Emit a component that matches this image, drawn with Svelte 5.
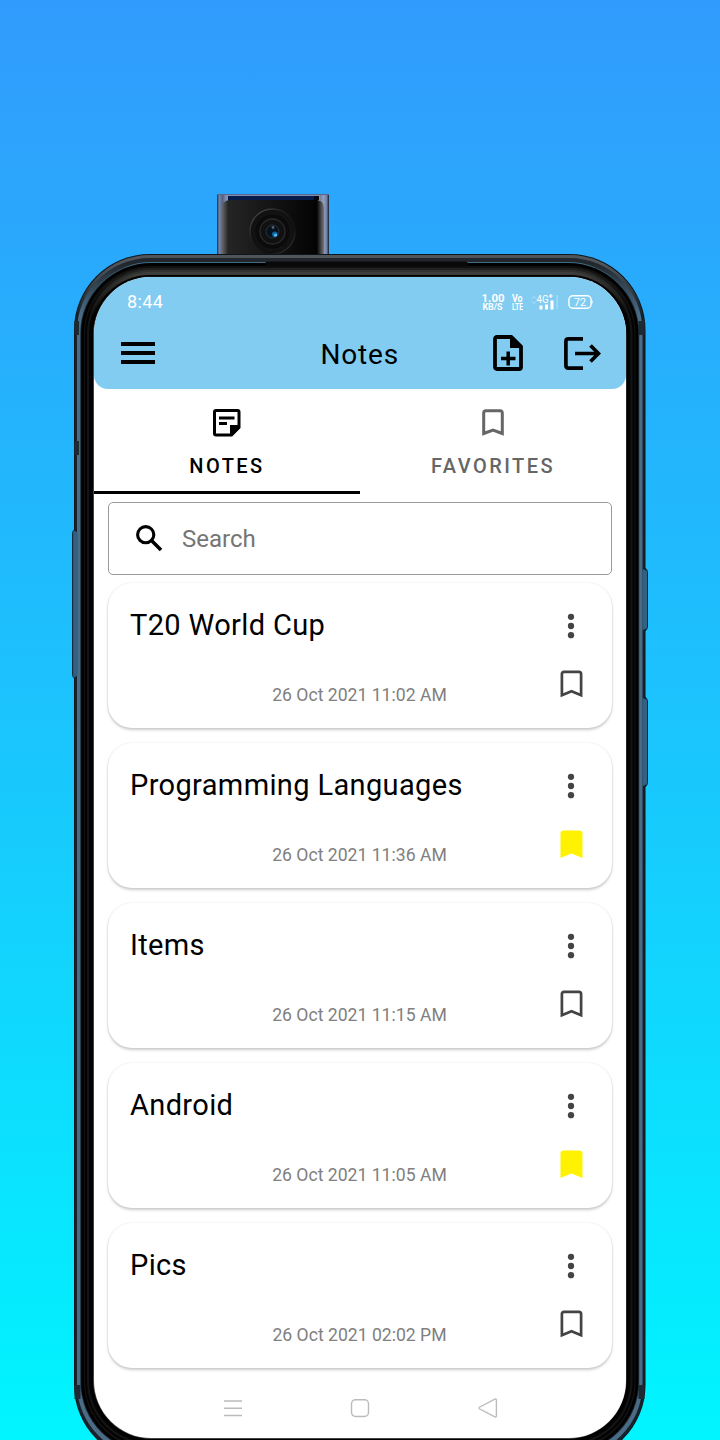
<script>
  const notes = [
    { title: 'T20 World Cup', date: '26 Oct 2021 11:02 AM', saved: false },
    { title: 'Programming Languages', date: '26 Oct 2021 11:36 AM', saved: true },
    { title: 'Items', date: '26 Oct 2021 11:15 AM', saved: false },
    { title: 'Android', date: '26 Oct 2021 11:05 AM', saved: true },
    { title: 'Pics', date: '26 Oct 2021 02:02 PM', saved: false }
  ];

  // Concentric layers of the phone body, from the outer edge to the glass.
  const layers = [
    { l: 74, t: 254, r: 76, fill: '#0d161d' },
    { l: 75, t: 255, r: 75, fill: 'url(#rim)' },
    { l: 77, t: 258, r: 73, fill: 'url(#rimInner)' },
    { l: 80.3, t: 262, r: 71, fill: 'url(#line)' },
    { l: 81.2, t: 263, r: 70, fill: '#000' },
    { l: 84, t: 266, r: 67, fill: 'url(#bezelA)' },
    { l: 85, t: 268, r: 66, fill: 'url(#bezelB)' },
    { l: 87, t: 270, r: 64, fill: 'url(#bezelC)' },
    { l: 89, t: 272, r: 62, fill: 'url(#bezelD)' },
    { l: 91, t: 275, r: 59, fill: '#000' },
    { l: 93, t: 276, r: 59, fill: 'url(#edge)' }
  ];
  const gradients = [
    { id: 'rim', top: '#50555b', side: '#17232c' },
    { id: 'rimInner', top: '#22272d', side: '#4b6c86' },
    { id: 'line', top: '#3f6d85', side: '#1b2a35' },
    { id: 'bezelA', top: '#101010', side: '#121212' },
    { id: 'bezelB', top: '#242423', side: '#020202' },
    { id: 'bezelC', top: '#363634', side: '#141414' },
    { id: 'bezelD', top: '#4b4b48', side: '#030303' },
    { id: 'edge', top: '#020202', side: '#444' }
  ];
</script>

<main>
  <svg class="device" viewBox="0 0 720 1440" aria-hidden="true">
    <defs>
      {#each gradients as g}
        <linearGradient id={g.id} gradientUnits="userSpaceOnUse" x1="0" y1="254" x2="0" y2="335">
          <stop offset="0.12" stop-color={g.top} />
          <stop offset="0.75" stop-color={g.side} />
        </linearGradient>
      {/each}
      <linearGradient id="pillar">
        <stop offset="0" stop-color="#202940" />
        <stop offset="0.02" stop-color="#7485ad" />
        <stop offset="0.05" stop-color="#55627f" />
        <stop offset="0.09" stop-color="#929eb8" />
        <stop offset="0.91" stop-color="#6a738c" />
        <stop offset="0.95" stop-color="#939fc0" />
        <stop offset="0.98" stop-color="#7180a5" />
        <stop offset="1" stop-color="#121a28" />
      </linearGradient>
      <linearGradient id="module">
        <stop offset="0" stop-color="#686868" />
        <stop offset="0.06" stop-color="#252525" />
        <stop offset="0.5" stop-color="#131313" />
        <stop offset="0.93" stop-color="#030303" />
        <stop offset="1" stop-color="#777" />
      </linearGradient>
      <linearGradient id="ring" x2="1" y2="1">
        <stop offset="0" stop-color="#5a5a5a" />
        <stop offset="0.35" stop-color="#202020" />
        <stop offset="0.7" stop-color="#111" />
        <stop offset="1" stop-color="#444" />
      </linearGradient>
    </defs>

    <rect x="217" y="194" width="112" height="62" fill="url(#pillar)" />
    <rect x="217" y="194" width="112" height="1" fill="#55668d" />
    <path d="M226 195h94v7h-94z" fill="#8290b2" />
    <rect x="228" y="196" width="90" height="6" fill="#061c4d" />
    <rect x="314" y="196" width="5" height="4" fill="#05080e" />
    <path d="M222 256v-48q0-7 7-8h88q7 1 7 8v48z" fill="url(#module)" />
    <circle cx="272.500" cy="231.500" r="22.500" fill="#111" stroke="url(#ring)" stroke-width="1.300" />
    <circle cx="272.500" cy="231.500" r="18" fill="#0b0b0b" stroke="#171717" />
    <circle cx="272.500" cy="231.500" r="12.500" fill="#111" stroke="#2b2b2b" stroke-width="1.300" />
    <circle cx="272.500" cy="231.500" r="6.500" fill="#07121d" stroke="#253542" />
    <circle cx="273" cy="227.500" r="1.400" fill="#58616b" />
    <circle cx="274.800" cy="234.300" r="2.800" fill="#0d619b" />
    <circle cx="275.500" cy="235" r="1.600" fill="#58baf0" />

    <path d="M75 529q-2.500 1-2.500 5v140q0 4 2.500 5z M645 568q2.500 1 2.500 5v53q0 4-2.500 5z M645 697q2.500 1 2.500 5v80q0 4-2.500 5z" fill="#25506f" stroke="#142b3b" />

    {#each layers as layer}
      <rect
        x={layer.l}
        y={layer.t}
        width={719.5 - layer.l * 2}
        height={1715 - layer.t * 2}
        rx={layer.r}
        fill={layer.fill}
      />
    {/each}

    <rect x="265" y="261.500" width="203" height="5" rx="2.500" fill="#090909" />
    <path d="M74.500 321h4.500v14h-4.500z M74.500 441h4.500v14h-4.500z M74.500 1385h6v14h-6z M638.500 321h6v14h-6z M638.500 1385h6v14h-6z" fill="#1d2a34" />
    <path d="M73.500 530q4.500 2 4.500 6v136q0 4-4.500 6z M642.500 569q4.500 1 4.500 4v53q0 3-4.500 4z M642.500 698q4.500 1 4.500 4v80q0 3-4.500 4z" fill="#336183" />
  </svg>

  <section class="screen">
    <header>
      <div class="status">
        <span class="clock">8:44</span>
        <div class="signals">
          <svg class="heavy" width="24" height="18" viewBox="0 0 24 18">
            <text x="0.500" y="9" font-size="11" textLength="23" lengthAdjust="spacingAndGlyphs">1.00</text>
            <text x="1.500" y="17" font-size="8.500" textLength="20" lengthAdjust="spacingAndGlyphs">KB/S</text>
          </svg>
          <svg class="heavy volte" width="11" height="18" viewBox="0 0 11 18">
            <text x="0" y="9" font-size="10" textLength="10.500" lengthAdjust="spacingAndGlyphs">Vo</text>
            <text x="0" y="17" font-size="9.500" textLength="11" lengthAdjust="spacingAndGlyphs">LTE</text>
          </svg>
          <svg class="network" width="28" height="18" viewBox="0 0 28 18">
            <path d="M1 5.500l2-2 2 2M1 8.500l2 2 2-2" fill="none" stroke="#b5e0f6" />
            <text x="5.500" y="10" font-size="10.500" textLength="12" lengthAdjust="spacingAndGlyphs">4G</text>
            <path d="M17.800 3h4M19.800 1v4" stroke="#fff" stroke-width="1.200" />
            <path d="M8.500 12.500h3v4h-3zM14 11.500h3v5h-3zM19.500 7.500h3v9h-3z" fill="#fff" />
            <path d="M25.500 2h1.500v14h-1.500z" fill="#a6daf4" />
          </svg>
          <svg width="25" height="16" viewBox="0 0 25 16">
            <rect x=".9" y="1.700" width="22.200" height="12.600" rx="4" fill="none" stroke="#fff" stroke-width="1.400" />
            <path d="M23.500 5.500q2.500 2.500 0 5z" fill="#fff" />
            <text x="6" y="12" font-size="11.500" textLength="12" lengthAdjust="spacingAndGlyphs">72</text>
          </svg>
        </div>
      </div>
      <div class="bar">
        <svg class="menu" width="34" height="22" viewBox="0 0 34 22">
          <path d="M0 2h34M0 11h34M0 20h34" stroke="#000" stroke-width="3.800" />
        </svg>
        <h1>Notes</h1>
        <div class="actions">
          <svg width="30" height="36" viewBox="0 0 30 36">
            <path d="M4 2h14.500L28 11.500V32q0 2-2 2H4q-2 0-2-2V4q0-2 2-2z" fill="none" stroke="#000" stroke-width="3.800" stroke-linejoin="round" />
            <path d="M17 1l12 12H17z" />
            <path d="M8 23.500h14.500M15.200 16.500v14" stroke="#000" stroke-width="3.500" />
          </svg>
          <svg width="37" height="33" viewBox="0 0 37 33">
            <path d="M19 1.900H4.500q-2.600 0-2.600 2.600v24q0 2.600 2.600 2.600H19M11 16.500h24M26.500 8.500l8 8-8 8" fill="none" stroke="#000" stroke-width="3.700" />
          </svg>
        </div>
      </div>
    </header>

    <nav class="tabs">
      <div class="tab active">
        <svg width="28" height="28" viewBox="0 0 28 28">
          <path d="M3 1.500h21.500q1.500 0 1.500 1.500v15.500L18.500 26H3q-1.500 0-1.500-1.500V3q0-1.500 1.500-1.500z" fill="none" stroke="currentColor" stroke-width="3" />
          <path d="M6 9h15.500M6 14.500h8" stroke="currentColor" stroke-width="3" />
          <path d="M17 16h10v3l-8 8h-2z" fill="currentColor" />
        </svg>
        <span>NOTES</span>
      </div>
      <div class="tab">
        <svg width="22" height="28" viewBox="0 0 22 28">
          <path d="M1.700 24.500V4q0-2.300 2.300-2.300h14q2.300 0 2.300 2.300v20.500L11 21z" fill="none" stroke="currentColor" stroke-width="3" />
        </svg>
        <span>FAVORITES</span>
      </div>
    </nav>

    <label class="search">
      <svg width="27" height="27" viewBox="0 0 27 27">
        <circle cx="9.700" cy="9.700" r="8.100" fill="none" stroke="#000" stroke-width="3.100" />
        <path d="M15.500 15.500l9.500 9.500" stroke="#000" stroke-width="3.600" />
      </svg>
      <input placeholder="Search" aria-label="Search" />
    </label>

    <div class="list">
      {#each notes as note}
        <article>
          <h2>{note.title}</h2>
          <svg class="more" width="8" height="28" viewBox="0 0 8 28">
            <circle cx="4" cy="4.800" r="3.150" /><circle cx="4" cy="14" r="3.150" /><circle cx="4" cy="23.200" r="3.150" />
          </svg>
          <time>{note.date}</time>
          <svg class="mark" class:saved={note.saved} width="23" height="28" viewBox="0 0 23 28">
            {#if note.saved}
              <path d="M.5 28V3.500Q.5.500 3.500.500h16q3 0 3 3V28l-11-4.500z" />
            {:else}
              <path d="M1.900 25.300V4q0-2.200 2.200-2.200h14.800q2.200 0 2.200 2.200v21.300l-9.600-4z" fill="none" stroke="#444" stroke-width="2.700" />
            {/if}
          </svg>
        </article>
      {/each}
    </div>

    <footer>
      <svg width="20" height="20" viewBox="0 0 20 20"><path d="M1 3h18M1 10.200h18M1 17.500h18" /></svg>
      <svg width="20" height="20" viewBox="0 0 20 20"><rect x="1.500" y="1.700" width="17" height="16.800" rx="4" /></svg>
      <svg width="20" height="20" viewBox="0 0 20 20"><path d="M1.800 9L16.400 1.300q2-.9 2 1v15.400q0 1.900-2 .9L1.800 11q-1.500-1 0-2z" /></svg>
    </footer>
  </section>
</main>

<style>
  :global(body) {
    margin: 0;
  }

  main {
    position: relative;
    box-sizing: border-box;
    width: 720px;
    height: 1440px;
    padding: 277px 94px 0;
    overflow: hidden;
    background: linear-gradient(#319bfc 0%, #1bc4fd 50%, #00f5ff 100%);
    font-family: Roboto, sans-serif;
    color: #000;
  }

  .device {
    position: absolute;
    top: 0;
    left: 0;
    width: 720px;
    height: 1440px;
  }

  .screen {
    position: relative;
    display: flex;
    flex-direction: column;
    width: 532px;
    height: 1161px;
    overflow: hidden;
    border-radius: 57px;
    background: #fff;
  }

  svg {
    display: block;
    flex: none;
  }

  header {
    box-sizing: border-box;
    height: 112px;
    padding-top: 13px;
    border-radius: 0 0 14px 14px;
    background: #82ccf2;
  }

  .status {
    display: flex;
    justify-content: space-between;
    align-items: center;
    height: 24px;
    padding: 0 33px;
    color: #fff;
  }

  .clock {
    margin-bottom: 1px;
    font-size: 18px;
    line-height: 22px;
    letter-spacing: 0.35px;
  }

  .signals {
    display: flex;
    align-items: center;
  }

  .signals text {
    font-family: Roboto, sans-serif;
    fill: #fff;
  }

  .heavy {
    font-weight: 700;
  }

  .volte {
    margin: 0 8px 0 7px;
  }

  .network {
    margin-right: 9px;
  }

  .bar {
    display: grid;
    grid-template-columns: 1fr auto 1fr;
    align-items: center;
    height: 54px;
    margin-top: 12px;
    padding: 0 25px 0 26.500px;
  }

  h1 {
    margin: 2px 0 0 -2px;
    font-size: 28px;
    font-weight: 400;
    letter-spacing: 0.8px;
  }

  .actions {
    display: flex;
    justify-content: flex-end;
    align-items: center;
    gap: 41px;
  }

  .tabs {
    display: grid;
    grid-template-columns: 1fr 1fr;
    height: 105px;
  }

  .tab {
    display: flex;
    flex-direction: column;
    align-items: center;
    box-sizing: border-box;
    padding-top: 20px;
    border-bottom: 3px solid transparent;
    font-size: 20px;
    font-weight: 500;
    line-height: 24px;
    letter-spacing: 2.450px;
    color: #666;
  }

  .tab span {
    margin-top: 17px;
  }

  .active {
    border-color: #000;
    color: #000;
  }

  .search {
    display: flex;
    align-items: center;
    gap: 19px;
    box-sizing: border-box;
    flex: none;
    height: 73px;
    margin: 8px 14px 0;
    padding-left: 27px;
    border: 1.500px solid #999;
    border-radius: 5px;
  }

  input {
    flex: 1;
    padding: 0;
    border: 0;
    outline: 0;
    background: none;
    font: 400 24px Roboto, sans-serif;
  }

  input::placeholder {
    color: #757575;
    opacity: 1;
  }

  .list {
    display: flex;
    flex-direction: column;
    gap: 15px;
    padding: 8px 14px 0;
  }

  article {
    display: grid;
    grid-template-columns: 1fr 23px;
    grid-template-rows: 37px 28px;
    row-gap: 26px;
    align-items: center;
    justify-items: center;
    box-sizing: border-box;
    height: 145px;
    padding: 24px 29px 0 22px;
    border-radius: 24px;
    background: #fff;
    box-shadow: 0 2px 3px rgba(0, 0, 0, 0.2), 0 0 2px rgba(0, 0, 0, 0.1);
  }

  h2 {
    justify-self: start;
    margin: 0;
    font-size: 29px;
    font-weight: 400;
    line-height: 37px;
    letter-spacing: 0.36px;
  }

  .more {
    margin-right: 0.5px;
    fill: #444;
  }

  time {
    margin: 22px 0 0 29px;
    font-size: 17.600px;
    color: #808080;
  }

  .saved {
    fill: #fff200;
  }

  footer {
    display: flex;
    justify-content: center;
    gap: 107.500px;
    padding-top: 30px;
  }

  footer svg {
    fill: none;
    stroke: #bbb;
    stroke-width: 1.400;
  }
</style>
